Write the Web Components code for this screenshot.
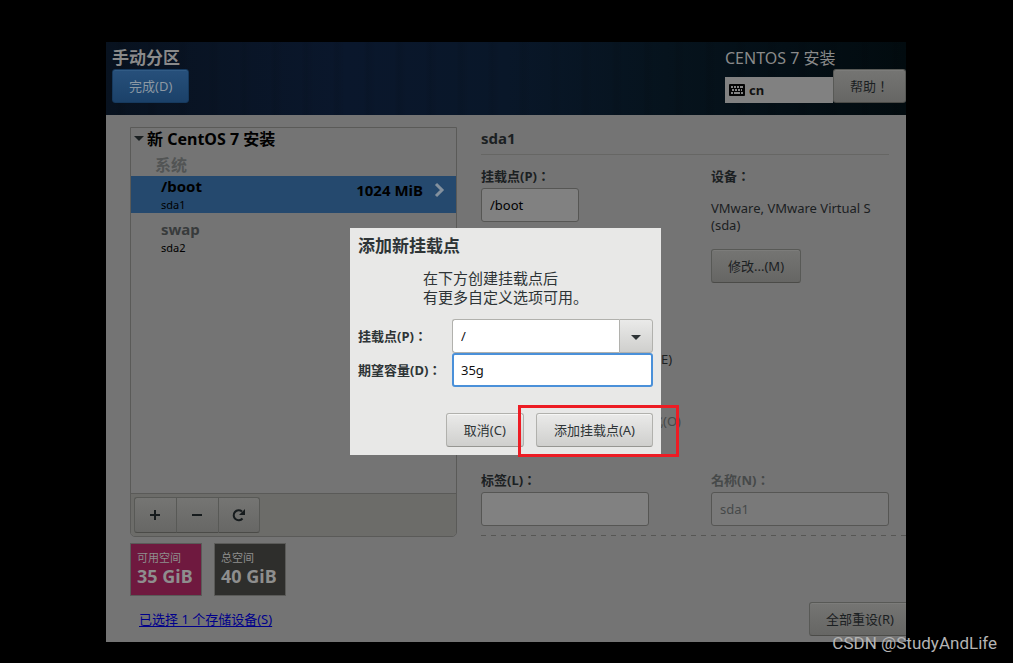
<!DOCTYPE html>
<html lang="zh-CN">
  <head>
    <meta charset="UTF-8" />
    <title>CentOS 7 安装</title>
    <style>
      * {
        box-sizing: border-box;
      }
      body {
        margin: 0;
        min-height: 100vh;
        padding: 42px 107px 21px 106px;
        background: #000;
        color: #1b2022;
        font: 13px/18px "Noto Sans", "Noto Sans CJK SC", sans-serif;
        position: relative;
        display: flex;
      }
      installer-window {
        flex: 1;
      }
    </style>
  </head>
  <body>
    <installer-window>
      <installer-header slot="header"></installer-header>
      <partition-list slot="list">
        <partition-row name="/boot" device="sda1" size="1024 MiB" selected></partition-row>
        <partition-row name="swap" device="sda2"></partition-row>
      </partition-list>
      <space-tile slot="space" label="可用空间" value="35 GiB"></space-tile>
      <space-tile slot="space" label="总空间" value="40 GiB" class="total"></space-tile>
      <partition-details slot="details"></partition-details>
      <mount-dialog slot="dialog"></mount-dialog>
    </installer-window>
    <water-mark>CSDN @StudyAndLife</water-mark>

    <template id="installer-window-template">
      <style>
        :host {
          display: flex;
          flex-direction: column;
          position: relative;
          overflow: hidden;
          background: #747474;
        }
        main {
          flex: 1;
          display: grid;
          grid-template-columns: 327fr 425fr;
          gap: 24px;
          padding: 12px 0 6px 24px;
        }
        .left {
          display: flex;
          flex-direction: column;
        }
        .tiles {
          display: flex;
          gap: 12px;
          margin-top: 6px;
        }
        a {
          margin: 14px 9px 8px;
          align-self: flex-start;
          color: #00008b;
          text-underline-offset: 2px;
        }
        .backdrop {
          position: absolute;
          inset: 0;
          display: grid;
          place-items: center;
          padding: 0 1px 1px 0;
        }
      </style>
      <slot name="header"></slot>
      <main>
        <div class="left">
          <slot name="list"></slot>
          <div class="tiles"><slot name="space"></slot></div>
          <a href="#">已选择 1 个存储设备(S)</a>
        </div>
        <slot name="details"></slot>
      </main>
      <div class="backdrop"><slot name="dialog"></slot></div>
    </template>

    <template id="installer-header-template">
      <style>
        :host {
          display: flex;
          justify-content: space-between;
          height: 73px;
          padding: 6px 0 12px 6px;
          background:
            repeating-linear-gradient(90deg, #0000 0 9px, #0001 13px 15px, #0000 22px 31px),
            linear-gradient(90deg, #08121f, #0a172c 30%, #091729 50%, #06131d 70%, #020b0f);
          color: #8a8a8a;
        }
        h1 {
          margin: 0 0 1px;
          font-size: 17px;
          line-height: 20px;
        }
        .product {
          width: 181px;
        }
        .version {
          font-size: 16px;
          line-height: 21px;
        }
        .row {
          display: flex;
          align-items: flex-end;
        }
        .layout {
          flex: 1;
          display: flex;
          align-items: center;
          gap: 4px;
          height: 26px;
          padding: 0 4px;
          background: #818181;
          color: #111;
          font-weight: bold;
        }
        .wide {
          font-family: "Noto Sans", "Noto Sans CJK TC", sans-serif;
        }
      </style>
      <div>
        <h1>手动分区</h1>
        <gtk-button class="primary">完成(D)</gtk-button>
      </div>
      <div class="product">
        <div class="version">CENTOS 7 安装</div>
        <div class="row">
          <div class="layout">
            <svg width="16" height="12" viewBox="0 0 16 12">
              <rect width="16" height="12" rx="1" fill="#050505" />
              <path d="M2 3h2M5 3h2M8 3h2M11 3h3M3 6h2M6 6h2M9 6h2M12 6h1M2 9h2M5 9h6M12 9h2" stroke="#858585" stroke-width="2" />
            </svg>
            cn
          </div>
          <gtk-button class="wide" lang="zh-TW">帮助！</gtk-button>
        </div>
      </div>
    </template>

    <template id="gtk-button-template">
      <style>
        :host {
          display: inline-block;
          vertical-align: top;
          flex: none;
        }
        button {
          display: block;
          height: 34px;
          padding: 0 16px;
          border: 1px solid #585956;
          border-bottom-color: #4b4b48;
          border-radius: 3px;
          background: linear-gradient(#757573, #666664);
          box-shadow: inset 0 1px #7c7c7a;
          color: #1b2022;
          font: inherit;
          white-space: nowrap;
        }
        :host(.primary) button {
          background: linear-gradient(#27507b, #1b4169);
          border-color: #16395d;
          box-shadow: inset 0 1px #315b85;
          color: #8c98a3;
        }
        :host(.light) button {
          padding: 0 17px;
          background: linear-gradient(#eaeae9, #cfcfcd);
          border-color: #b1b1ad;
          border-bottom-color: #969692;
          box-shadow: inset 0 1px #f6f6f5;
          color: #2e3436;
        }
      </style>
      <button type="button"><slot></slot></button>
    </template>

    <template id="partition-list-template">
      <style>
        :host {
          flex: 1;
          display: flex;
          flex-direction: column;
          border: 1px solid #5a5a58;
          border-radius: 0 0 5px 5px;
          color: #000;
        }
        .rows {
          flex: 1;
        }
        h2 {
          display: flex;
          align-items: center;
          gap: 3px;
          margin: 0;
          padding-left: 3px;
          font-size: 16px;
          line-height: 22px;
        }
        h3 {
          margin: 4px 0 0 24px;
          color: #525454;
          font-size: 16px;
          line-height: 22px;
        }
        .toolbar {
          display: flex;
          padding: 3px;
          border-top: 1px solid #5a5a58;
          border-radius: 0 0 4px 4px;
          background: #6c6c69;
        }
        .toolbar button {
          display: grid;
          place-items: center;
          width: 42px;
          height: 36px;
          padding: 0;
          border: 1px solid #585956;
          border-bottom-color: #4b4b48;
          border-right-width: 0;
          background: linear-gradient(#757573, #676765);
        }
        .toolbar button:first-child {
          border-radius: 3px 0 0 3px;
        }
        .toolbar button:last-child {
          border-right-width: 1px;
          border-radius: 0 3px 3px 0;
        }
      </style>
      <div class="rows">
        <h2>
          <svg width="10" height="6" viewBox="0 0 10 6"><path d="M0 0h10L5 5z" fill="#1b2022" /></svg>
          新 CentOS 7 安装
        </h2>
        <h3>系统</h3>
        <slot></slot>
      </div>
      <div class="toolbar">
        <button type="button" aria-label="添加">
          <svg width="16" height="16" fill="none" stroke="#161b1d" stroke-width="2"><path d="M2 8h10M7 3v10" /></svg>
        </button>
        <button type="button" aria-label="删除">
          <svg width="16" height="16" fill="none" stroke="#161b1d" stroke-width="2"><path d="M2 8h10" /></svg>
        </button>
        <button type="button" aria-label="刷新">
          <svg width="16" height="16" fill="none" stroke="#161b1d" stroke-width="2">
            <path d="M11.500 11.500A5 5 0 1 1 11 4.500" />
            <path d="M14 2v6H8z" fill="#161b1d" stroke="none" />
          </svg>
        </button>
      </div>
    </template>

    <template id="partition-row-template">
      <style>
        :host {
          display: flex;
          align-items: flex-start;
          gap: 10px;
          height: 37px;
          margin-bottom: 6px;
          padding: 0 11px 0 30px;
          color: #383b3c;
          font-size: 15px;
          font-weight: bold;
        }
        :host([selected]) {
          background: #25496e;
          color: #000;
        }
        .info {
          flex: 1;
          line-height: 20px;
        }
        .device {
          color: #000;
          font-size: 11px;
          font-weight: normal;
          line-height: 17px;
        }
        .size {
          line-height: 28px;
        }
        svg {
          display: none;
        }
        :host([selected]) svg {
          display: block;
        }
      </style>
      <div class="info">
        <div class="name"></div>
        <div class="device"></div>
      </div>
      <div class="size"></div>
      <svg width="12" height="28" fill="none" stroke="#84919e" stroke-width="3"><path d="M3 8l6 6-6 6" /></svg>
    </template>

    <template id="space-tile-template">
      <style>
        :host {
          min-width: 72px;
          height: 53px;
          padding: 5px 6px;
          border: 1px solid #5a5a58;
          background: #6f193f;
          color: #8e8e8e;
          white-space: nowrap;
        }
        :host(.total) {
          background: #2e2e2c;
        }
        .label {
          font-size: 11px;
          line-height: 18px;
        }
        .value {
          font-size: 18px;
          font-weight: bold;
          line-height: 19px;
        }
      </style>
      <div class="label"></div>
      <div class="value"></div>
    </template>

    <template id="form-field-template">
      <style>
        :host {
          display: block;
        }
        label {
          display: block;
          font-family: "Noto Sans", "Noto Sans CJK TC", sans-serif;
          font-size: 13px;
          font-weight: bold;
          line-height: 18px;
        }
        input {
          display: block;
          width: 100%;
          height: 34px;
          margin-top: 3px;
          padding: 0 8px;
          border: 1px solid #565654;
          border-radius: 3px;
          background: #818181;
          color: #000;
          font: inherit;
          font-weight: normal;
        }
        :host([disabled]) label {
          color: #464949;
        }
        :host([disabled]) input {
          background: #797979;
          color: #464949;
        }
      </style>
      <label lang="zh-TW"><span></span><input type="text" /></label>
    </template>

    <template id="check-option-template">
      <style>
        label {
          display: flex;
          align-items: center;
          gap: 6px;
          white-space: nowrap;
        }
        :host([disabled]) {
          color: #464949;
        }
        input {
          width: 14px;
          height: 14px;
          margin: 0;
        }
      </style>
      <label><input type="checkbox" /><slot></slot></label>
    </template>

    <template id="partition-details-template">
      <style>
        :host {
          display: flex;
          flex-direction: column;
        }
        h2 {
          margin: 0 17px 12px 0;
          padding-bottom: 5px;
          border-bottom: 1px solid #666664;
          font-size: 15px;
          line-height: 22px;
        }
        .form {
          display: grid;
          grid-template-columns: 230fr 178fr;
          margin-right: 17px;
        }
        .mount {
          width: 98px;
        }
        .label {
          width: 168px;
        }
        h4 {
          margin: 0 0 15px;
          font-family: "Noto Sans", "Noto Sans CJK TC", sans-serif;
          font-size: 13px;
          line-height: 18px;
        }
        p {
          margin: 0 0 15px;
          line-height: 17px;
        }
        .options {
          grid-column: 1 / 3;
          display: grid;
          gap: 44px;
          margin: 67px 0 41px;
        }
        .encrypt {
          margin-left: 130px;
        }
        .format {
          margin-left: 149px;
        }
        hr {
          width: 100%;
          height: 1px;
          margin: 9px 0 0;
          border: 0;
          background: repeating-linear-gradient(90deg, #565654 0 5px, #0000 5px 10px);
        }
        .reset {
          margin: auto -5px 0 auto;
        }
      </style>
      <h2>sda1</h2>
      <div class="form">
        <form-field class="mount" label="挂载点(P)：" value="/boot"></form-field>
        <div>
          <h4 lang="zh-TW">设备：</h4>
          <p>VMware, VMware Virtual S<br />(sda)</p>
          <gtk-button>修改...(M)</gtk-button>
        </div>
        <div class="options">
          <check-option class="encrypt">加密(E)</check-option>
          <check-option class="format" disabled>化(O)</check-option>
        </div>
        <form-field class="label" label="标签(L)：" value=""></form-field>
        <form-field label="名称(N)：" value="sda1" disabled></form-field>
      </div>
      <hr />
      <gtk-button class="reset">全部重设(R)</gtk-button>
    </template>

    <template id="mount-dialog-template">
      <style>
        :host {
          display: block;
          position: relative;
          width: 311px;
          padding: 8px;
          background: #e8e8e7;
          color: #2e3436;
        }
        h2 {
          margin: 0;
          font-size: 17px;
          line-height: 20px;
        }
        p {
          margin: 13px 0 12px 65px;
          font-size: 15px;
          line-height: 19px;
        }
        .fields {
          display: grid;
          grid-template-columns: 1fr 201px;
          align-items: center;
        }
        label {
          font-family: "Noto Sans", "Noto Sans CJK TC", sans-serif;
          font-weight: bold;
          white-space: nowrap;
        }
        .combo {
          display: flex;
        }
        input {
          width: 100%;
          min-width: 0;
          height: 34px;
          padding: 0 8px;
          border: 1px solid #b1b1ad;
          border-radius: 3px;
          background: #fff;
          color: #111;
          font: inherit;
        }
        .combo input {
          border-right: 0;
          border-radius: 3px 0 0 3px;
        }
        .combo button {
          flex: none;
          width: 34px;
          padding: 0;
          border: 1px solid #b1b1ad;
          border-radius: 0 3px 3px 0;
          background: linear-gradient(#eaeae9, #cfcfcd);
        }
        .active {
          padding: 0 7px;
          border: 2px solid #4a90d9;
        }
        .actions {
          display: flex;
          justify-content: flex-end;
          gap: 12px;
          margin-top: 26px;
        }
        .marker {
          position: absolute;
          right: -18px;
          bottom: -2px;
          width: 161px;
          height: 52px;
          border: 3px solid #ed1c24;
        }
      </style>
      <h2>添加新挂载点</h2>
      <p>在下方创建挂载点后<br />有更多自定义选项可用。</p>
      <div class="fields">
        <label for="mount" lang="zh-TW">挂载点(P)：</label>
        <div class="combo">
          <input id="mount" type="text" value="/" />
          <button type="button" aria-label="选择挂载点">
            <svg width="10" height="6" viewBox="0 0 10 6"><path d="M0 0h10L5 5z" fill="#2e3436" /></svg>
          </button>
        </div>
        <label for="capacity" lang="zh-TW">期望容量(D)：</label>
        <input id="capacity" class="active" type="text" value="35g" />
      </div>
      <div class="actions">
        <gtk-button class="light">取消(C)</gtk-button>
        <gtk-button class="light">添加挂载点(A)</gtk-button>
      </div>
      <div class="marker"></div>
    </template>

    <template id="water-mark-template">
      <style>
        :host {
          position: absolute;
          right: 16px;
          bottom: 9px;
          color: #b4b4b4;
          font: 17px/22px Roboto, sans-serif;
        }
      </style>
      <slot></slot>
    </template>

    <script>
      class TemplateElement extends HTMLElement {
        constructor() {
          super();
          const template = document.getElementById(this.localName + "-template");
          const shadow = this.attachShadow({ mode: "open" });
          const reset = document.createElement("style");
          reset.textContent = ":host, * { box-sizing: border-box; }";
          shadow.appendChild(reset);
          shadow.appendChild(template.content.cloneNode(true));
        }

        setText(selector, name) {
          this.shadowRoot.querySelector(selector).textContent = this.getAttribute(name) || "";
        }
      }

      class PartitionRow extends TemplateElement {
        connectedCallback() {
          this.setText(".name", "name");
          this.setText(".device", "device");
          this.setText(".size", "size");
        }
      }

      class SpaceTile extends TemplateElement {
        connectedCallback() {
          this.setText(".label", "label");
          this.setText(".value", "value");
        }
      }

      class FormField extends TemplateElement {
        connectedCallback() {
          this.setText("span", "label");
          const input = this.shadowRoot.querySelector("input");
          input.value = this.getAttribute("value");
          input.disabled = this.hasAttribute("disabled");
        }
      }

      class CheckOption extends TemplateElement {
        connectedCallback() {
          this.shadowRoot.querySelector("input").disabled = this.hasAttribute("disabled");
        }
      }

      customElements.define("gtk-button", class extends TemplateElement {});
      customElements.define("form-field", FormField);
      customElements.define("check-option", CheckOption);
      customElements.define("partition-row", PartitionRow);
      customElements.define("space-tile", SpaceTile);
      customElements.define("partition-list", class extends TemplateElement {});
      customElements.define("partition-details", class extends TemplateElement {});
      customElements.define("mount-dialog", class extends TemplateElement {});
      customElements.define("installer-header", class extends TemplateElement {});
      customElements.define("installer-window", class extends TemplateElement {});
      customElements.define("water-mark", class extends TemplateElement {});
    </script>
  </body>
</html>
